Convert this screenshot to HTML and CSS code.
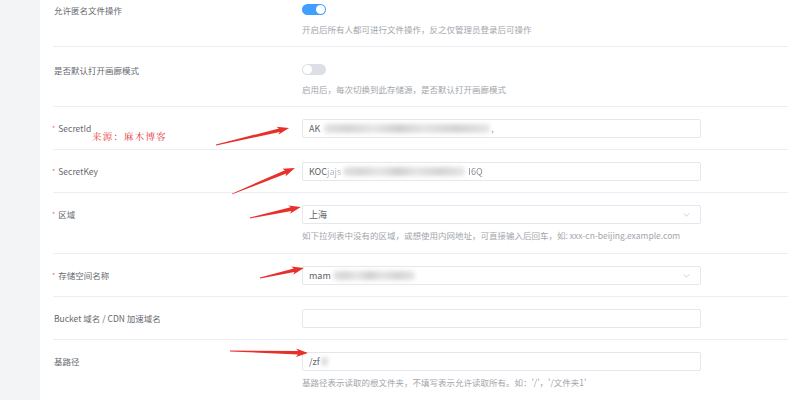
FILE: index.html
```html
<!DOCTYPE html>
<html lang="zh-CN">
<head>
<meta charset="utf-8">
<title>存储源设置</title>
<link rel="stylesheet" href="styles.css">
</head>
<body>
<div class="page">
  <aside class="aside"></aside>
  <main class="main">
    <div class="form">
      <div class="row row-switch first">
        <div class="label label-switch">允许匿名文件操作</div>
        <div class="control">
          <div class="switch-line"><span class="switch on"><span class="knob"></span></span></div>
          <div class="help">开启后所有人都可进行文件操作，反之仅管理员登录后可操作</div>
        </div>
      </div>
      <div class="row row-switch">
        <div class="label label-switch">是否默认打开画廊模式</div>
        <div class="control">
          <div class="switch-line"><span class="switch"><span class="knob"></span></span></div>
          <div class="help">启用后，每次切换到此存储源，是否默认打开画廊模式</div>
        </div>
      </div>
      <div class="row">
        <div class="label req"><span class="star">*</span>SecretId</div>
        <div class="control">
          <div class="input"><span>AK</span><span class="blur b1"></span><span class="tail">,</span></div>
        </div>
      </div>
      <div class="row">
        <div class="label req"><span class="star">*</span>SecretKey</div>
        <div class="control">
          <div class="input"><span>KOC</span><span class="soft">jajs</span><span class="blur b2"></span><span class="soft2">I6Q</span></div>
        </div>
      </div>
      <div class="row row-help">
        <div class="label req"><span class="star">*</span>区域</div>
        <div class="control">
          <div class="input select"><span>上海</span><svg class="chev" viewBox="0 0 8 5" width="7" height="4"><path d="M0.5 0.5 L4 4 L7.5 0.5" fill="none" stroke="#c0c4cc" stroke-width="1"/></svg></div>
          <div class="help help-tight">如下拉列表中没有的区域，或想使用内网地址，可直接输入后回车，如: xxx-cn-beijing.example.com</div>
        </div>
      </div>
      <div class="row">
        <div class="label req"><span class="star">*</span>存储空间名称</div>
        <div class="control">
          <div class="input select"><span>mam</span><span class="blur b3"></span><svg class="chev" viewBox="0 0 8 5" width="7" height="4"><path d="M0.5 0.5 L4 4 L7.5 0.5" fill="none" stroke="#c0c4cc" stroke-width="1"/></svg></div>
        </div>
      </div>
      <div class="row">
        <div class="label">Bucket 域名 / CDN 加速域名</div>
        <div class="control">
          <div class="input"></div>
        </div>
      </div>
      <div class="row row-help">
        <div class="label">基路径</div>
        <div class="control">
          <div class="input"><span>/zf</span><span class="blur b4"></span></div>
          <div class="help help-tight">基路径表示读取的根文件夹，不填写表示允许读取所有。如：'/'，'/文件夹1'</div>
        </div>
      </div>
    </div>
  </main>
</div>
<div class="watermark">来源：麻木博客</div>
<svg class="arrows" width="790" height="400" viewBox="0 0 790 400">
  <g fill="#e8302a">
    <polygon transform="translate(216,145) rotate(-13.1)" points="0,-0.4 65,-1.8 63,-4.2 75,0 63,4.2 65,1.8 0,0.4"/>
    <polygon transform="translate(232,194) rotate(-22.4)" points="0,-0.4 58,-1.8 56,-4.2 68,0 56,4.2 58,1.8 0,0.4"/>
    <polygon transform="translate(250,218) rotate(-12.2)" points="0,-0.4 42,-1.8 40,-4.2 52,0 40,4.2 42,1.8 0,0.4"/>
    <polygon transform="translate(260,278) rotate(-12.8)" points="0,-0.4 35,-1.8 33,-4.2 45,0 33,4.2 35,1.8 0,0.4"/>
    <polygon transform="translate(230,351) rotate(1.5)" points="0,-0.4 68,-1.8 66,-4.2 78,0 66,4.2 68,1.8 0,0.4"/>
  </g>
</svg>
</body>
</html>
```

FILE: styles.css
```css
html, body {
  margin: 0;
  padding: 0;
  background: #ffffff;
}
body {
  width: 790px;
  height: 400px;
  overflow: hidden;
  position: relative;
  font-family: "Noto Sans CJK SC", "Noto Sans", sans-serif;
  color: #606266;
}
.page {
  display: flex;
  height: 400px;
}
.aside {
  width: 40px;
  flex: none;
  background: #f3f4f6;
}
.main {
  flex: 1;
  padding: 0 2px 0 13px;
  overflow: hidden;
}
.form {
  margin-top: -13px;
}
.row {
  display: flex;
  border-bottom: 1px solid #ebeef5;
  padding: 12px 0 11px;
}
.row-switch {
  padding: 16px 0 10px;
}
.row-help {
  padding-bottom: 11px;
}
.label {
  width: 248px;
  height: 19px;
  flex: none;
  padding-left: 1px;
  font-size: 8.5px;
  line-height: 19px;
  color: #66696e;
  white-space: nowrap;
  display: flex;
  align-items: center;
}
.label-switch {
  height: 13px;
  line-height: 13px;
  margin-top: 1px;
}
.star {
  color: #f56c6c;
  font-size: 7px;
  margin-left: -2px;
  margin-right: 3px;
}
.control {
  width: 399px;
  flex: none;
}
.switch-line {
  height: 12px;
  display: flex;
  align-items: center;
}
.switch {
  width: 24px;
  height: 11px;
  border-radius: 6px;
  background: #dcdfe6;
  display: flex;
  align-items: center;
  padding: 0 1px;
  box-sizing: border-box;
}
.switch .knob {
  width: 9px;
  height: 9px;
  border-radius: 50%;
  background: #ffffff;
}
.switch.on {
  background: #409eff;
  justify-content: flex-end;
}
.help {
  margin-top: 7px;
  font-size: 8.5px;
  line-height: 14px;
  color: #a3a6ab;
  white-space: nowrap;
}
.help-tight {
  margin-top: 4px;
}
.input {
  height: 19px;
  box-sizing: border-box;
  border: 1px solid #e4e7ed;
  border-radius: 2px;
  padding: 0 6px;
  display: flex;
  align-items: center;
  font-size: 9px;
  color: #606266;
  white-space: nowrap;
}
.chev {
  margin-left: auto;
  margin-right: 4px;
}
.soft {
  color: #b8bbc0;
  filter: blur(0.6px);
}
.soft2 {
  color: #8a8d92;
  filter: blur(0.3px);
}
.blur {
  display: inline-block;
  height: 9px;
  border-radius: 4px;
  filter: blur(2.2px);
  background: linear-gradient(90deg, #e2e2e2 0%, #d6d6d6 15%, #e6e6e6 30%, #d0d0d0 45%, #e4e4e4 60%, #d4d4d4 80%, #e6e6e6 100%);
}
.b1 { width: 166px; margin-left: 4px; }
.b2 { width: 122px; margin: 0 3px 0 2px; }
.b3 { width: 82px; margin-left: 2px; }
.b4 { width: 7px; margin-left: 1px; }
.tail {
  margin-left: 1px;
  color: #9a9a9a;
}
.watermark {
  position: absolute;
  left: 92px;
  top: 130px;
  font-size: 9.5px;
  line-height: 13px;
  letter-spacing: 1.2px;
  color: #e5403a;
  font-family: "Noto Serif CJK SC", "Noto Sans CJK SC", serif;
}
.arrows {
  position: absolute;
  left: 0;
  top: 0;
  pointer-events: none;
}
```
